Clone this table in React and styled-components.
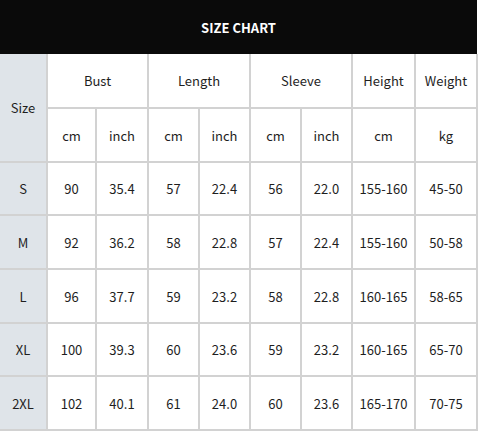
import React from 'react';
import styled, { createGlobalStyle } from 'styled-components';

const GlobalStyle = createGlobalStyle`
  body {
    margin: 0;
    background: #ffffff;
    font-family: "Noto Sans CJK SC", "Noto Sans", sans-serif;
  }
`

const Wrapper = styled.div`
  width: 478px;
`

const Title = styled.div`
  height: 54px;
  width: 477px;
  background: #0a0a0a;
  color: #ffffff;
  display: flex;
  align-items: center;
  justify-content: center;
  font-size: 13px;
  font-weight: 700;
`

const Grid = styled.div`
  display: grid;
  grid-template-columns: 46px 47px 50px 49px 49px 49px 49px 61px 60px;
  grid-template-rows: 53px 52px 51px 52px 52px 51px 52px;
  gap: 2px;
  padding: 0 2px 2px 0;
  background: #d2d2d2;
`

const Cell = styled.div`
  display: flex;
  align-items: center;
  justify-content: center;
  background: ${p => (p.$side ? '#dfe4e9' : '#ffffff')};
  color: #1e1e1e;
  font-size: 13px;
  grid-column: ${p => (p.$cols ? `span ${p.$cols}` : 'auto')};
  grid-row: ${p => (p.$rows ? `span ${p.$rows}` : 'auto')};
`

const rows = [
  ['S', '90', '35.4', '57', '22.4', '56', '22.0', '155-160', '45-50'],
  ['M', '92', '36.2', '58', '22.8', '57', '22.4', '155-160', '50-58'],
  ['L', '96', '37.7', '59', '23.2', '58', '22.8', '160-165', '58-65'],
  ['XL', '100', '39.3', '60', '23.6', '59', '23.2', '160-165', '65-70'],
  ['2XL', '102', '40.1', '61', '24.0', '60', '23.6', '165-170', '70-75'],
]

const App = () => {
  return (
    <Wrapper>
      <GlobalStyle />
      <Title>SIZE CHART</Title>
      <Grid>
        <Cell $side $rows={2}>Size</Cell>
        <Cell $cols={2}>Bust</Cell>
        <Cell $cols={2}>Length</Cell>
        <Cell $cols={2}>Sleeve</Cell>
        <Cell>Height</Cell>
        <Cell>Weight</Cell>
        {['cm', 'inch', 'cm', 'inch', 'cm', 'inch', 'cm', 'kg'].map((unit, i) => (
          <Cell key={'u' + i}>{unit}</Cell>
        ))}
        {rows.map(row =>
          row.map((value, i) => (
            <Cell key={row[0] + i} $side={i === 0}>{value}</Cell>
          ))
        )}
      </Grid>
    </Wrapper>
  );
}

export default App;
